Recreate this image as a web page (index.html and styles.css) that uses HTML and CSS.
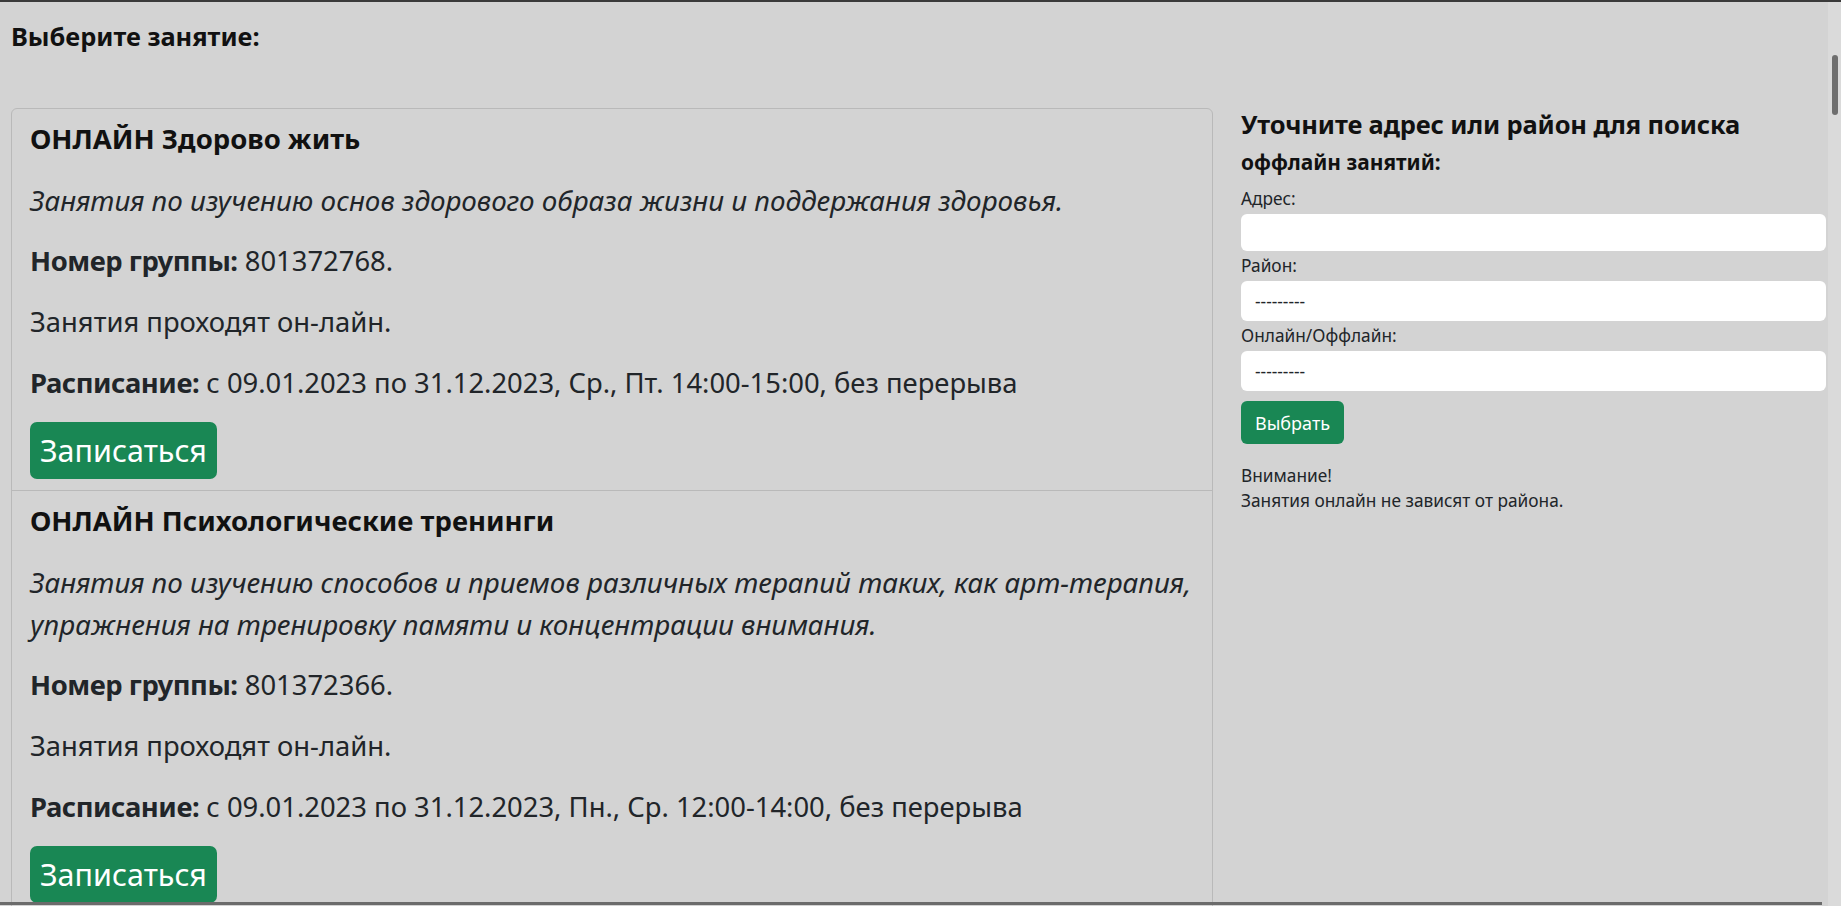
FILE: index.html
```html
<!DOCTYPE html>
<html lang="ru">
<head>
<meta charset="utf-8">
<title>Выберите занятие</title>
<link rel="stylesheet" href="styles.css">
</head>
<body>
<main class="page">
  <h1 class="page-title">Выберите занятие:</h1>
  <div class="layout">
    <div class="card">
      <div class="item">
        <h2 class="item-title">ОНЛАЙН Здорово жить</h2>
        <p class="item-desc">Занятия по изучению основ здорового образа жизни и поддержания здоровья.</p>
        <p><strong>Номер группы:</strong> 801372768.</p>
        <p>Занятия проходят он-лайн.</p>
        <p><strong>Расписание:</strong> с 09.01.2023 по 31.12.2023, Ср., Пт. 14:00-15:00, без перерыва</p>
        <button class="btn-enroll" type="button">Записаться</button>
      </div>
      <div class="item">
        <h2 class="item-title">ОНЛАЙН Психологические тренинги</h2>
        <p class="item-desc">Занятия по изучению способов и приемов различных терапий таких, как арт-терапия, упражнения на тренировку памяти и концентрации внимания.</p>
        <p><strong>Номер группы:</strong> 801372366.</p>
        <p>Занятия проходят он-лайн.</p>
        <p><strong>Расписание:</strong> с 09.01.2023 по 31.12.2023, Пн., Ср. 12:00-14:00, без перерыва</p>
        <button class="btn-enroll" type="button">Записаться</button>
      </div>
    </div>
    <aside class="filter">
      <h3 class="filter-title">Уточните адрес или район для поиска</h3>
      <h4 class="filter-subtitle">оффлайн занятий:</h4>
      <form class="filter-form">
        <label class="field-label" for="address">Адрес:</label>
        <input class="field-input" id="address" type="text">
        <label class="field-label" for="district">Район:</label>
        <select class="field-select" id="district"><option>---------</option></select>
        <label class="field-label" for="mode">Онлайн/Оффлайн:</label>
        <select class="field-select" id="mode"><option>---------</option></select>
        <button class="btn-choose" type="button">Выбрать</button>
      </form>
      <div class="notice">
        <div>Внимание!</div>
        <div>Занятия онлайн не зависят от района.</div>
      </div>
    </aside>
  </div>
</main>
<div class="vscroll"><div class="vthumb"></div></div>
<div class="hscroll"></div>
</body>
</html>
```
FILE: styles.css
```css
html, body {
  margin: 0;
  padding: 0;
  overflow: hidden;
  height: 100%;
}
body {
  background: #d3d3d3;
  color: #212529;
  font-family: "Noto Sans", "Open Sans", sans-serif;
  border-top: 2px solid #3a3a3a;
  box-sizing: border-box;
}
.page {
  padding: 19px 0 0 11px;
}
.page-title {
  margin: 0;
  font-size: 25.4px;
  font-weight: 700;
  line-height: 30px;
  color: #111;
}
.layout {
  margin-top: 57px;
  display: grid;
  grid-template-columns: 1202px 585px;
  column-gap: 28px;
  align-items: start;
}
.card {
  border: 1px solid #b9b9b9;
  border-radius: 6px;
}
.item {
  padding: 9px 18px 11px;
}
.item + .item {
  border-top: 1px solid #b9b9b9;
}
.item-title {
  margin: 0 0 19px;
  font-size: 27.5px;
  font-weight: 700;
  line-height: 42px;
  color: #111;
}
.item p {
  margin: 0 0 19px;
  font-size: 27.4px;
  line-height: 42px;
}
.item p strong {
  letter-spacing: -0.45px;
}
.item p.item-desc {
  font-style: italic;
  font-size: 27.8px;
}
.item p:last-of-type {
  margin-bottom: 18px;
}
.btn-enroll {
  display: block;
  font-family: inherit;
  font-size: 30.5px;
  line-height: 45px;
  padding: 6px 10px;
  color: #fff;
  background: #198754;
  border: 0;
  border-radius: 7px;
}
.filter-title {
  margin: 0;
  font-size: 25.5px;
  font-weight: 700;
  letter-spacing: -0.15px;
  line-height: 32px;
  color: #111;
}
.filter-subtitle {
  margin: 10px 0 0;
  font-size: 20.9px;
  font-weight: 700;
  line-height: 25px;
  color: #111;
}
.filter-form {
  margin-top: 11px;
  display: flex;
  flex-direction: column;
  align-items: flex-start;
}
.field-label {
  font-size: 17.3px;
  line-height: 26px;
  margin-bottom: 2px;
}
.field-input,
.field-select {
  box-sizing: border-box;
  width: 100%;
  border: 0;
  border-radius: 6px;
  background: #fff;
  margin: 0 0 2px;
  font-family: inherit;
  font-size: 17.3px;
  color: #212529;
  padding: 0 14px;
  outline: none;
}
.field-input {
  height: 37px;
}
.field-select {
  height: 40px;
  appearance: none;
  -webkit-appearance: none;
}
.btn-choose {
  margin-top: 8px;
  height: 43px;
  padding: 0 14px;
  font-family: inherit;
  font-size: 18px;
  color: #fff;
  background: #198754;
  border: 0;
  border-radius: 6px;
}
.notice {
  margin-top: 19px;
  font-size: 17.3px;
  line-height: 25px;
}
.vscroll {
  position: fixed;
  top: 2px;
  right: 0;
  bottom: 0;
  width: 13px;
  background: #dadada;
}
.vthumb {
  position: absolute;
  top: 53px;
  left: 4px;
  width: 6px;
  height: 60px;
  border-radius: 3px;
  background: #6e6e6e;
}
.hscroll {
  position: fixed;
  left: 0;
  bottom: 1px;
  width: 1822px;
  height: 3px;
  background: #6b6b6b;
}
```
